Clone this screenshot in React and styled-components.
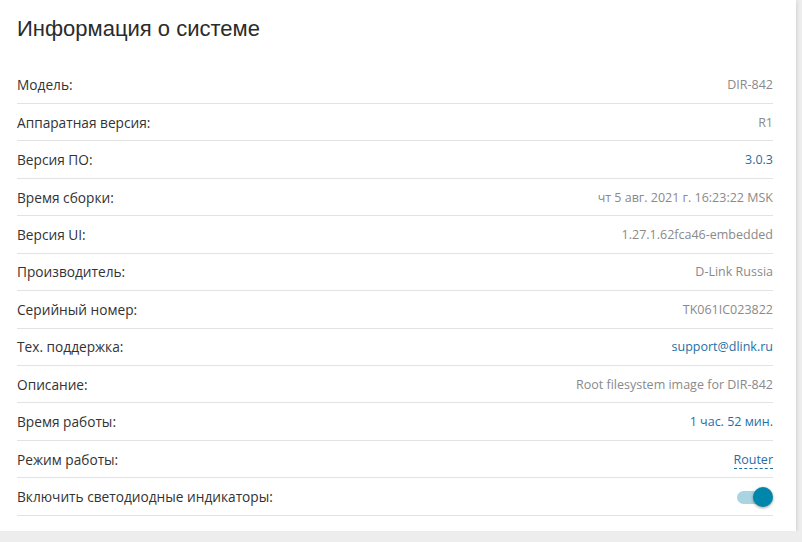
import React, { useState } from 'react';
import styled, { createGlobalStyle } from 'styled-components';

const GlobalStyle = createGlobalStyle`
  body {
    margin: 0;
    background: #ededed;
    font-family: "Open Sans", "Noto Sans", sans-serif;
  }
`;

const Card = styled.section`
  width: 796px;
  box-sizing: border-box;
  background: #fff;
  padding: 0 23px 15px 17px;
  box-shadow: 0 1px 4px rgba(0, 0, 0, 0.18);
`;

const Title = styled.h1`
  margin: 0;
  padding-top: 16px;
  height: 66.5px;
  box-sizing: border-box;
  font-family: "Liberation Sans", Arial, sans-serif;
  font-weight: 400;
  font-size: 22px;
  line-height: 26px;
  color: #2b2b2b;
`;

const Row = styled.div`
  display: flex;
  align-items: center;
  justify-content: space-between;
  height: 37.45px;
  box-sizing: border-box;
  border-bottom: 1px solid #e3e3e3;
`;

const Label = styled.span`
  font-size: 13.7px;
  color: #333;
`;

const Value = styled.span`
  font-size: 12.5px;
  color: ${(p) => (p.$accent ? '#1f6fa5' : '#8a8a8a')};
`;

const Link = styled(Value)`
  border-bottom: 1px dashed #1f6fa5;
  line-height: 16px;
  margin-top: 2px;
`;

const Switch = styled.button`
  position: relative;
  width: 36px;
  height: 20px;
  padding: 0;
  border: none;
  background: none;
  cursor: pointer;
  &::before {
    content: '';
    position: absolute;
    left: 0;
    top: 4px;
    width: 34px;
    height: 13px;
    border-radius: 7px;
    background: ${(p) => (p.$on ? '#a9d4e2' : '#ccc')};
  }
  &::after {
    content: '';
    position: absolute;
    top: 0;
    left: ${(p) => (p.$on ? '16px' : '0')};
    width: 20px;
    height: 20px;
    border-radius: 50%;
    background: ${(p) => (p.$on ? '#0086aa' : '#f5f5f5')};
    box-shadow: 0 1px 3px rgba(0, 0, 0, 0.4);
  }
`;

const rows = [
  ['Модель:', 'DIR-842'],
  ['Аппаратная версия:', 'R1'],
  ['Версия ПО:', '3.0.3', true],
  ['Время сборки:', 'чт 5 авг. 2021 г. 16:23:22 MSK'],
  ['Версия UI:', '1.27.1.62fca46-embedded'],
  ['Производитель:', 'D-Link Russia'],
  ['Серийный номер:', 'TK061IC023822'],
  ['Тех. поддержка:', 'support@dlink.ru', true],
  ['Описание:', 'Root filesystem image for DIR-842'],
  ['Время работы:', '1 час. 52 мин.', true],
];

export default function App() {
  const [leds, setLeds] = useState(true);
  return (
    <>
      <GlobalStyle />
      <Card>
        <Title>Информация о системе</Title>
        {rows.map(([label, value, accent]) => (
          <Row key={label}>
            <Label>{label}</Label>
            <Value $accent={accent}>{value}</Value>
          </Row>
        ))}
        <Row>
          <Label>Режим работы:</Label>
          <Link $accent>Router</Link>
        </Row>
        <Row>
          <Label>Включить светодиодные индикаторы:</Label>
          <Switch $on={leds} onClick={() => setLeds(!leds)} aria-label="LED" />
        </Row>
      </Card>
    </>
  );
}
